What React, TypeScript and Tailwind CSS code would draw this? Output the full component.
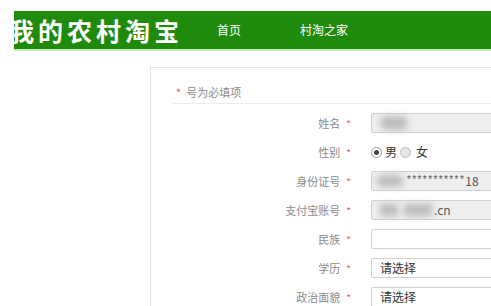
const font = { fontFamily: '"Noto Sans CJK SC", "Noto Sans", sans-serif' };

function Blur({ w, className = '' }: { w: number; className?: string }) {
  return <span className={`inline-block shrink-0 h-[12px] rounded-full bg-[#bdbdbd] blur-[3px] ${className}`} style={{ width: w }} />;
}

function Row({ label, children }: { label: string; children: React.ReactNode }) {
  return (
    <div className="flex items-center h-[20px] mb-[9px]">
      <div className="w-[200px] shrink-0 flex justify-end items-center text-[11px] text-[#8a8a8a]">
        <span>{label}</span>
        <span className="ml-[6px] text-[#e85a5a] text-[10px]">*</span>
      </div>
      <div className="ml-[20px] flex-1 h-full flex items-center">{children}</div>
    </div>
  );
}

function Box({ grey, children }: { grey?: boolean; children?: React.ReactNode }) {
  return (
    <div
      className={`w-full h-[20px] rounded-[2px] border border-[#d0d0d0] flex items-center px-[8px] text-[12px] text-[#333] ${
        grey ? 'bg-[#eeeeee]' : 'bg-white'
      }`}
    >
      {children}
    </div>
  );
}

export default function App() {
  return (
    <div className="w-[491px] h-[306px] overflow-hidden bg-white" style={font}>
      <div className="ml-[14px] mt-[11px] h-[38px] bg-[#1f8a0b] flex items-center overflow-hidden">
        <div className="-ml-[5px] text-[25px] font-bold tracking-[4px] text-white leading-none whitespace-nowrap">我的农村淘宝</div>
        <span className="ml-[34px] text-[12px] text-white">首页</span>
        <span className="ml-[59px] text-[12px] text-white">村淘之家</span>
      </div>
      <div className="ml-[14px] h-[2px] bg-[#c9e8b8]" />

      <div className="ml-[150px] mt-[16px] w-[420px] h-[300px] border border-[#e3e3e3] bg-white">
        <div className="ml-[22px] mt-[14px] h-[22px] border-b border-[#ececec] flex items-center pl-[3px] text-[11px] text-[#8a8a8a]">
          <span className="text-[#e85a5a] mr-[5px]">*</span>
          <span>号为必填项</span>
        </div>
        <div className="mt-[9px]">
          <Row label="姓名">
            <Box grey>
              <Blur w={28} className="h-[14px]" />
            </Box>
          </Row>
          <Row label="性别">
            <div className="flex items-center text-[12px] text-[#333]">
              <span className="w-[11px] h-[11px] rounded-full border border-[#999] bg-white flex items-center justify-center">
                <span className="w-[5px] h-[5px] rounded-full bg-[#444]" />
              </span>
              <span className="ml-[3px]">男</span>
              <span className="ml-[3px] w-[11px] h-[11px] rounded-full border border-[#bbb] bg-[#e6e6e6]" />
              <span className="ml-[5px]">女</span>
            </div>
          </Row>
          <Row label="身份证号">
            <Box grey>
              <Blur w={26} className="-ml-[3px]" />
              <span className="ml-[4px] text-[#555] whitespace-nowrap flex items-center">
                <span className="text-[10px] tracking-[1.4px] -mt-[3px]" style={{ fontFamily: '"Liberation Sans", sans-serif' }}>
                  ***********
                </span>
                <span className="text-[12px]">18</span>
              </span>
            </Box>
          </Row>
          <Row label="支付宝账号">
            <Box grey>
              <Blur w={18} className="rounded-none" />
              <Blur w={28} className="ml-[6px] rounded-none" />
              <span className="ml-[2px] text-[12px] text-[#555]">.cn</span>
            </Box>
          </Row>
          <Row label="民族">
            <Box />
          </Row>
          <Row label="学历">
            <Box>请选择</Box>
          </Row>
          <Row label="政治面貌">
            <Box>请选择</Box>
          </Row>
        </div>
      </div>
    </div>
  );
}
